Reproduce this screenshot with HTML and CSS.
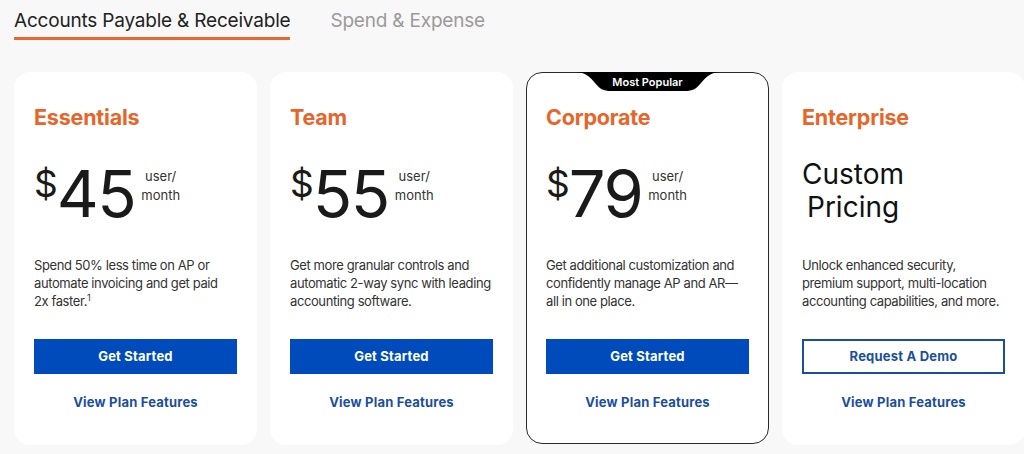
FILE: index.html
```html
<!DOCTYPE html>
<html>
<head>
<meta charset="utf-8">
<link rel="stylesheet" href="styles.css">
</head>
<body>
<div class="page">
  <nav class="tabs">
    <span class="tab active">Accounts Payable &amp; Receivable</span>
    <span class="tab">Spend &amp; Expense</span>
  </nav>
  <div class="cards">
    <div class="card">
      <h2 class="title">Essentials</h2>
      <div class="price"><span class="cur">$</span><span class="amt">45</span><span class="per">user/<br>month</span></div>
      <p class="desc">Spend 50% less time on AP or automate invoicing and get paid<br>2x faster.<sup>1</sup></p>
      <a class="btn">Get Started</a>
      <a class="link">View Plan Features</a>
    </div>
    <div class="card">
      <h2 class="title">Team</h2>
      <div class="price"><span class="cur">$</span><span class="amt">55</span><span class="per">user/<br>month</span></div>
      <p class="desc">Get more granular controls and automatic 2-way sync with leading accounting software.</p>
      <a class="btn">Get Started</a>
      <a class="link">View Plan Features</a>
    </div>
    <div class="card popular">
      <div class="badge">
        <svg class="badge-shape" width="146" height="19" viewBox="0 0 146 19"><path d="M0 0 H146 C136 0 132 4 126 11 C121 17 118 19 110 19 H36 C28 19 25 17 20 11 C14 4 10 0 0 0 Z" fill="#000"/></svg>
        <span class="badge-text">Most Popular</span>
      </div>
      <h2 class="title">Corporate</h2>
      <div class="price"><span class="cur">$</span><span class="amt">79</span><span class="per">user/<br>month</span></div>
      <p class="desc">Get additional customization and confidently manage AP and AR—all in one place.</p>
      <a class="btn">Get Started</a>
      <a class="link">View Plan Features</a>
    </div>
    <div class="card">
      <h2 class="title">Enterprise</h2>
      <div class="custom">Custom<br><span class="indent">Pricing</span></div>
      <p class="desc">Unlock enhanced security, premium support, multi-location accounting capabilities, and more.</p>
      <a class="btn outline">Request A Demo</a>
      <a class="link">View Plan Features</a>
    </div>
  </div>
</div>
</body>
</html>
```
FILE: styles.css
```css
* { box-sizing: border-box; }
html, body { margin: 0; padding: 0; }
body {
  background: #f8f8f8;
  font-family: Inter, "Liberation Sans", sans-serif;
  color: #1a1a1a;
  width: 1024px;
  height: 454px;
  overflow: hidden;
}
.page { padding: 0 0 0 14px; }
.tabs {
  display: flex;
  gap: 40px;
  height: 40px;
  align-items: flex-start;
  padding-top: 8px;
}
.tab {
  font-size: 19px;
  line-height: 26px;
  color: #9b9b9b;
  padding-bottom: 3px;
  letter-spacing: -0.2px;
}
.tab.active {
  color: #222;
  border-bottom: 3px solid #e8692c;
}
.cards {
  display: flex;
  gap: 13px;
  margin-top: 32px;
}
.card {
  position: relative;
  width: 243px;
  flex: none;
  height: 373px;
  background: #fff;
  border-radius: 16px;
  padding: 31px 20px 0 20px;
  display: flex;
  flex-direction: column;
}
.card.popular {
  border: 1px solid #2a2a2a;
  padding: 30px 19px 0 19px;
  height: 372px;
}
.title {
  margin: 0;
  font-size: 21.5px;
  line-height: 28px;
  font-weight: 700;
  color: #e8652a;
  letter-spacing: -0.2px;
}
.price {
  display: flex;
  align-items: flex-start;
  height: 97px;
  margin-top: 28px;
}
.cur {
  font-size: 37px;
  line-height: 40px;
  margin-top: 5px;
  font-weight: 400;
}
.amt {
  font-size: 65px;
  line-height: 70px;
  font-weight: 400;
  letter-spacing: -1.5px;
  margin-left: -1px;
}
.per {
  font-size: 13px;
  line-height: 19px;
  color: #333;
  margin-left: 6px;
  margin-top: 8px;
  text-align: center;
}
.custom {
  font-size: 28px;
  line-height: 33px;
  margin-top: 27px;
  height: 98px;
  color: #111;
}
.indent { margin-left: 5px; }
.desc {
  margin: 0;
  font-size: 13px;
  line-height: 18px;
  color: #333;
  height: 83px;
  letter-spacing: -0.4px;
}
.desc sup {
  font-size: 9px;
  line-height: 0;
  vertical-align: 0;
  position: relative;
  top: -5px;
}
.btn {
  display: block;
  height: 35px;
  line-height: 35px;
  background: #004bbb;
  color: #fff;
  text-align: center;
  font-size: 13px;
  font-weight: 700;
  letter-spacing: 0.2px;
}
.btn.outline {
  background: #fff;
  color: #1b4f9e;
  border: 2px solid #1b4f9e;
  line-height: 31px;
}
.link {
  display: block;
  text-align: center;
  margin-top: 19px;
  font-size: 13px;
  line-height: 18px;
  font-weight: 700;
  color: #1b4f9e;
  letter-spacing: 0.2px;
}
.badge {
  position: absolute;
  top: -1px;
  left: 50%;
  transform: translateX(-50%);
  width: 146px;
  height: 19px;
}
.badge-shape { position: absolute; top: 0; left: 0; }
.badge-text {
  position: relative;
  display: block;
  text-align: center;
  color: #fff;
  font-size: 11px;
  line-height: 20px;
  font-weight: 600;
}
```
